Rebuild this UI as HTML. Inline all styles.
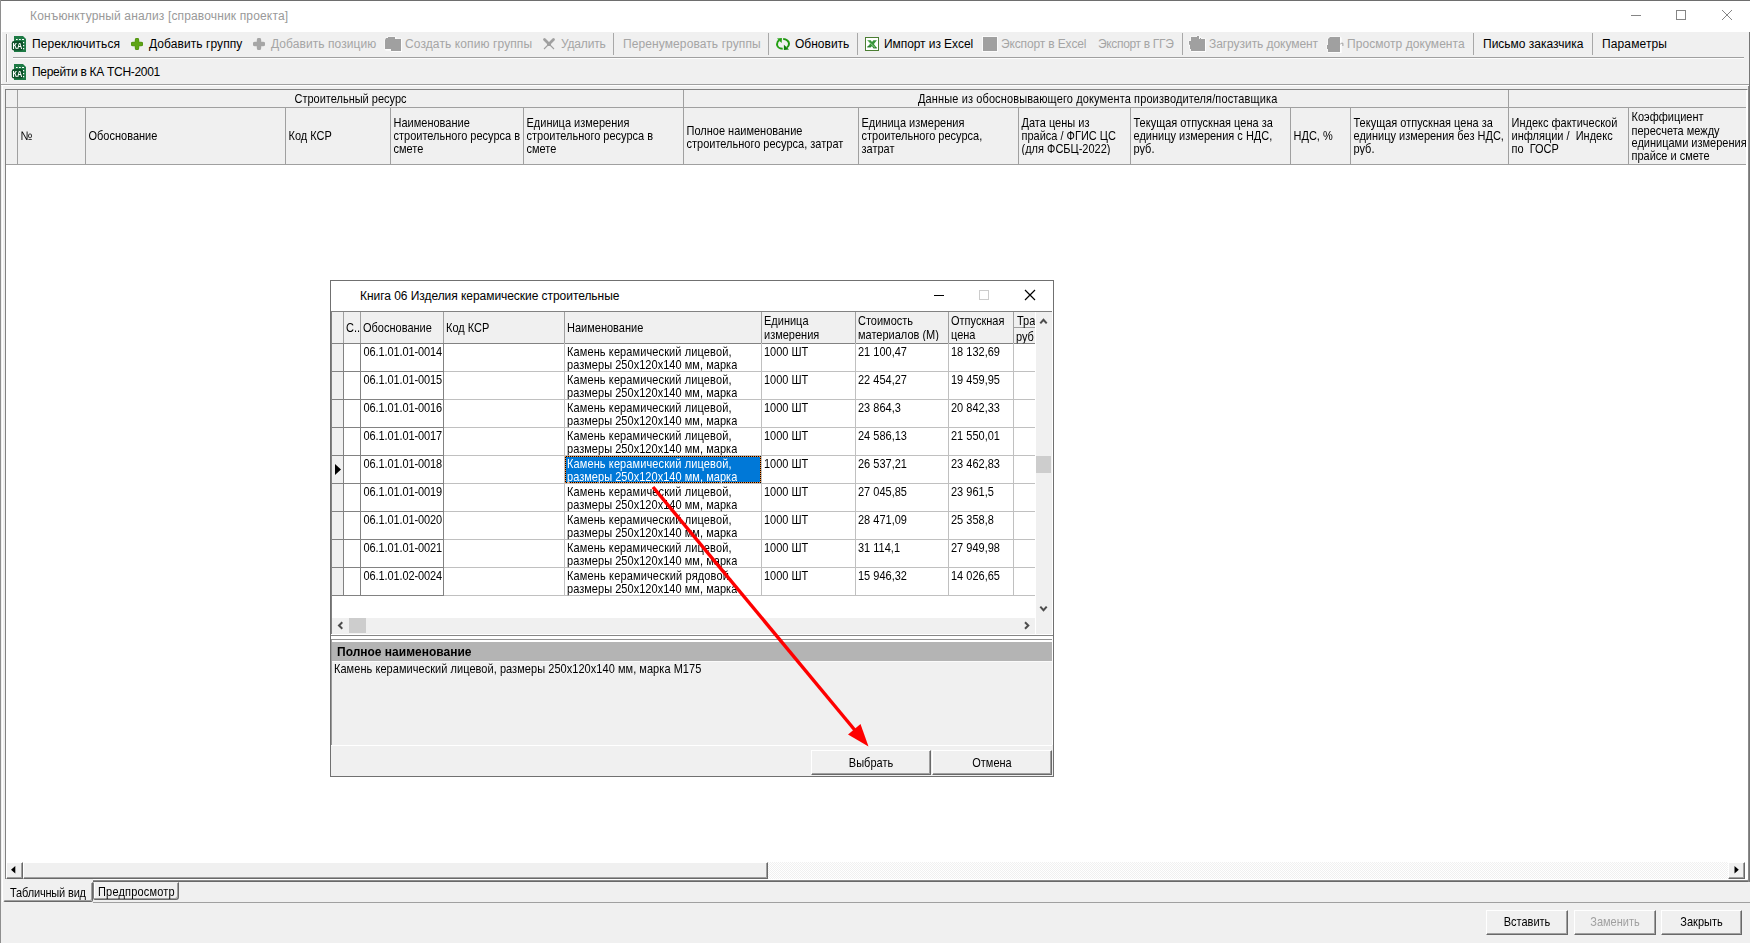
<!DOCTYPE html><html lang="ru"><head><meta charset="utf-8"><title>Конъюнктурный анализ</title><style>
*{box-sizing:border-box;margin:0;padding:0}
html,body{width:1750px;height:943px;overflow:hidden;background:#f0f0f0}
body{position:relative;font-family:"Liberation Sans",sans-serif;font-size:11px;color:#000;line-height:13px}
.a{position:absolute}
.t{position:absolute;white-space:nowrap}
.ui{font-size:12px;line-height:16px}
.dis{color:#a5a5a5}
.hl{position:absolute;height:1px;background:#a0a0a0}
.vl{position:absolute;width:1px;background:#a0a0a0}
.sep{position:absolute;width:1px;top:33px;height:22px;background:#a8a8a8}
.btn{position:absolute;background:#f0f0f0;border:1px solid;border-color:#fff #696969 #696969 #fff;box-shadow:inset -1px -1px 0 #a0a0a0;text-align:center;font-size:11px}
.hc{position:absolute;display:flex;align-items:center;font-size:11px;line-height:13px;padding-left:2.5px;padding-top:1px;overflow:hidden;white-space:nowrap}
.c{position:absolute;font-size:11px;line-height:11.6px;white-space:nowrap;transform:scaleY(1.12);transform-origin:0 0}
.m{line-height:11.6px;transform:scaleY(1.12);transform-origin:0 0}
.hc span{line-height:11.6px;transform:scaleY(1.12);transform-origin:0 50%;display:block}
.btn span{display:inline-block;transform:scaleY(1.12);transform-origin:50% 50%}
</style></head><body>
<div class="a" style="left:0;top:0;width:1750px;height:1px;background:#6e6e6e"></div>
<div class="a" style="left:0;top:0;width:1px;height:943px;background:#8e8e8e"></div>
<div class="a" style="left:2px;top:86px;width:1px;height:816px;background:#fff"></div>
<div class="a" style="left:1px;top:32px;width:1px;height:53px;background:#fff"></div>
<div class="a" style="left:1749px;top:31px;width:1px;height:851px;background:#777"></div>
<div class="a" style="left:1px;top:1px;width:1749px;height:31px;background:#fff"></div>
<div class="t ui" style="left:30px;top:8px;letter-spacing:0.150px;color:#999">Конъюнктурный анализ [справочник проекта]</div>
<svg class="a" style="left:1620px;top:1px" width="120" height="30" viewBox="1620 1 120 30"><g stroke="#858585" stroke-width="1" fill="none"><path d="M1631 15.500h10"/><rect x="1676.500" y="10.500" width="9" height="9"/><path d="M1722 10l10 10M1732 10l-10 10"/></g></svg>
<div class="a" style="left:6px;top:34px;width:1px;height:48px;background:#a0a0a0"></div>
<div class="a" style="left:7px;top:34px;width:1px;height:48px;background:#fff"></div>
<div class="hl" style="left:13px;top:57px;width:1731px;background:#a0a0a0"></div>
<div class="hl" style="left:13px;top:58px;width:1731px;background:#fdfdfd"></div>
<div class="hl" style="left:1px;top:84px;width:1748px;background:#a0a0a0"></div>
<div class="hl" style="left:1px;top:85px;width:1748px;background:#fff"></div>
<svg class="a" style="left:11px;top:36px;will-change:transform" width="16" height="16" viewBox="0 0 16 16"><path d="M3 0h9l3 3v13H3z" fill="#1e7a45"/><rect x="0.800" y="5" width="11.400" height="9.400" rx="2.200" fill="#0c4f28"/><path d="M5 3.500h1.700M8 3.500h1.800M11 3.500h2" stroke="#fff" stroke-width="1"/><path d="M12 6h1.200v1.200h-1.200zM12 9h1.200v1.200h-1.200zM12 12h1.200v1.200h-1.200z" fill="#fff"/><text x="1.600" y="13.300" font-family="Liberation Sans,sans-serif" font-size="9.400" font-weight="bold" fill="#fff" textLength="9.800" lengthAdjust="spacingAndGlyphs">КА</text></svg>
<svg class="a" style="left:11px;top:64px;will-change:transform" width="16" height="16" viewBox="0 0 16 16"><path d="M3 0h9l3 3v13H3z" fill="#1e7a45"/><rect x="0.800" y="5" width="11.400" height="9.400" rx="2.200" fill="#0c4f28"/><path d="M5 3.500h1.700M8 3.500h1.800M11 3.500h2" stroke="#fff" stroke-width="1"/><path d="M12 6h1.200v1.200h-1.200zM12 9h1.200v1.200h-1.200zM12 12h1.200v1.200h-1.200z" fill="#fff"/><text x="1.600" y="13.300" font-family="Liberation Sans,sans-serif" font-size="9.400" font-weight="bold" fill="#fff" textLength="9.800" lengthAdjust="spacingAndGlyphs">КА</text></svg>
<div class="t ui" style="left:32px;top:36px;letter-spacing:0.083px">Переключиться</div>
<svg class="a" style="left:131px;top:38px" width="12" height="12" viewBox="0 0 12 12"><path d="M2 6h8M6 2v8" stroke="#4a8a0c" stroke-width="4.400" stroke-linecap="round"/><path d="M2 6h8M6 2v8" stroke="#5fa416" stroke-width="3.400" stroke-linecap="round"/></svg>
<div class="t ui" style="left:149px;top:36px;letter-spacing:0.071px">Добавить группу</div>
<svg class="a" style="left:253px;top:38px" width="12" height="12" viewBox="0 0 12 12"><path d="M2 6h8M6 2v8" stroke="#a6a6a6" stroke-width="4.400" stroke-linecap="round"/><path d="M2 6h8M6 2v8" stroke="#a6a6a6" stroke-width="3.400" stroke-linecap="round"/></svg>
<div class="t ui dis" style="left:271px;top:36px;letter-spacing:0.067px">Добавить позицию</div>
<svg class="a" style="left:384px;top:36px" width="18" height="16" viewBox="384 36 18 16"><path d="M385 40l1-2h2v-1h7v2h6v12h-10v-2h-6z" fill="#a0a0a0" stroke="#fbfbfb" stroke-width="1.200" paint-order="stroke" filter="drop-shadow(1px 1px 0 #fff)"/></svg>
<div class="t ui dis" style="left:405px;top:36px;letter-spacing:0.105px">Создать копию группы</div>
<svg class="a" style="left:542px;top:37px" width="14" height="14" viewBox="542 37 14 14"><g stroke="#a0a0a0" fill="none"><path d="M544.500 39.500L549 44M553.500 39.500L549 44" stroke-width="2.800" stroke-linecap="round"/><path d="M549 44l-5 5M549 44l5 5" stroke-width="1.100"/></g><rect x="547" y="42" width="4" height="4" fill="#a0a0a0"/></svg>
<div class="t ui dis" style="left:561px;top:36px;letter-spacing:-0.167px">Удалить</div>
<div class="sep" style="left:613px"></div>
<div class="t ui dis" style="left:623px;top:36px;letter-spacing:0.100px">Перенумеровать группы</div>
<div class="sep" style="left:768px"></div>
<svg class="a" style="left:776px;top:38px" width="14" height="12" viewBox="0 0 14 12"><g fill="none" stroke="#23a012" stroke-width="2"><path d="M6.700 10.800C3 10.800 1 8.500 1 6.200C1 4.300 1.900 3 3.300 2.200"/></g><path d="M1 0.400L5.900 0L5.700 5z" fill="#23a012"/><g fill="none" stroke="#1f9510" stroke-width="2"><path d="M7.200 1.100C10.500 1.100 13 3.300 13 5.800C13 7.500 12.200 8.700 11 9.500"/></g><path d="M7.900 6.800V12L13 11.500z" fill="#0f7f0a"/></svg>
<div class="t ui" style="left:795px;top:36px;letter-spacing:0.000px">Обновить</div>
<div class="sep" style="left:857px"></div>
<svg class="a" style="left:865px;top:37px" width="14" height="14" viewBox="0 0 14 14"><rect x="0.500" y="0.500" width="13" height="13" fill="#fff" stroke="#4c7e33"/><path d="M2.200 3.200h3.600L7 5L8.400 3.200h3.500L8.900 7L12 11.200H8.400L7 9.200L5.600 10.200H2L5.200 6.800z" fill="#37953a"/><path d="M2.500 9.600h3l.5.600H2.200zM8.600 10.400h3l.3.800H8.400z" fill="#1f6a22"/><path d="M3 4l7 6.500" stroke="#a8d8a0" stroke-width="0.800"/></svg>
<div class="t ui" style="left:884px;top:36px;letter-spacing:-0.071px">Импорт из Excel</div>
<div class="a" style="left:983px;top:37px;width:14px;height:14px;background:#a0a0a0;box-shadow:0 0 0 1px #fafafa"></div>
<div class="t ui dis" style="left:1001px;top:36px;letter-spacing:-0.143px">Экспорт в Excel</div>
<div class="t ui dis" style="left:1098px;top:36px;letter-spacing:-0.333px">Экспорт в ГГЭ</div>
<div class="sep" style="left:1182px"></div>
<svg class="a" style="left:1188px;top:35px" width="18" height="17" viewBox="1188 35 18 17"><path d="M1191 37h6v-1h2v3h1v-1h1v1h4v12h-14v-2h-1v-4.300h-1V41h2z" fill="#a0a0a0" stroke="#fbfbfb" stroke-width="1.200" paint-order="stroke" filter="drop-shadow(1px 1px 0 #fff)"/></svg>
<div class="t ui dis" style="left:1209px;top:36px;letter-spacing:-0.059px">Загрузить документ</div>
<svg class="a" style="left:1326px;top:36px" width="18" height="17" viewBox="1326 36 18 17"><path d="M1330 37h10v15h-12v-3h-1v-4h1v-6z" fill="#a0a0a0" stroke="#fbfbfb" stroke-width="1.200" paint-order="stroke" filter="drop-shadow(1px 1px 0 #fff)"/><path d="M1340 44.500l1.300-1.300h1.600v2.800" fill="none" stroke="#a0a0a0" stroke-width="1"/></svg>
<div class="t ui dis" style="left:1347px;top:36px;letter-spacing:0.059px">Просмотр документа</div>
<div class="sep" style="left:1473px"></div>
<div class="t ui" style="left:1483px;top:36px;letter-spacing:0.000px">Письмо заказчика</div>
<div class="sep" style="left:1592px"></div>
<div class="t ui" style="left:1602px;top:36px;letter-spacing:0.125px">Параметры</div>
<div class="t ui" style="left:32px;top:64px;letter-spacing:-0.300px">Перейти в КА ТСН-2001</div>
<div class="a" style="left:5px;top:89px;width:1743px;height:792px;background:#fff;border:1px solid #828282;border-right-color:#fff;border-bottom-color:#fff"></div>
<div class="a" style="left:6px;top:90px;width:1740px;height:74px;background:#f0f0f0"></div>
<div class="hl" style="left:6px;top:107px;width:1740px"></div>
<div class="hl" style="left:6px;top:164px;width:1740px"></div>
<div class="vl" style="left:17px;top:90px;height:74px"></div>
<div class="vl" style="left:85px;top:108px;height:56px"></div>
<div class="vl" style="left:285px;top:108px;height:56px"></div>
<div class="vl" style="left:390px;top:108px;height:56px"></div>
<div class="vl" style="left:523px;top:108px;height:56px"></div>
<div class="vl" style="left:683px;top:90px;height:74px"></div>
<div class="vl" style="left:858px;top:108px;height:56px"></div>
<div class="vl" style="left:1018px;top:108px;height:56px"></div>
<div class="vl" style="left:1130px;top:108px;height:56px"></div>
<div class="vl" style="left:1290px;top:108px;height:56px"></div>
<div class="vl" style="left:1350px;top:108px;height:56px"></div>
<div class="vl" style="left:1508px;top:90px;height:74px"></div>
<div class="vl" style="left:1628px;top:108px;height:56px"></div>
<div class="t m" style="left:18px;top:93px;width:665px;text-align:center">Строительный ресурс</div>
<div class="t m" style="left:918px;top:93px;letter-spacing:0.119px;font-size:11px">Данные из обосновывающего документа производителя/поставщика</div>
<div class="hc" style="left:18px;top:108px;width:67px;height:56px"><span>№</span></div>
<div class="hc" style="left:86px;top:108px;width:199px;height:56px"><span>Обоснование</span></div>
<div class="hc" style="left:286px;top:108px;width:104px;height:56px"><span>Код КСР</span></div>
<div class="hc" style="left:391px;top:108px;width:132px;height:56px"><span>Наименование<br>строительного ресурса в<br>смете</span></div>
<div class="hc" style="left:524px;top:108px;width:159px;height:56px"><span>Единица измерения<br>строительного ресурса в<br>смете</span></div>
<div class="hc" style="left:684px;top:109px;width:174px;height:56px"><span>Полное наименование<br>строительного ресурса, затрат</span></div>
<div class="hc" style="left:859px;top:108px;width:159px;height:56px"><span>Единица измерения<br>строительного ресурса,<br>затрат</span></div>
<div class="hc" style="left:1019px;top:108px;width:111px;height:56px"><span>Дата цены из<br>прайса / ФГИС ЦС<br>(для ФСБЦ-2022)</span></div>
<div class="hc" style="left:1131px;top:108px;width:159px;height:56px"><span>Текущая отпускная цена за<br>единицу измерения с НДС,<br>руб.</span></div>
<div class="hc" style="left:1291px;top:108px;width:59px;height:56px"><span>НДС, %</span></div>
<div class="hc" style="left:1351px;top:108px;width:157px;height:56px"><span>Текущая отпускная цена за<br>единицу измерения без НДС,<br>руб.</span></div>
<div class="hc" style="left:1509px;top:108px;width:119px;height:56px"><span>Индекс фактической<br>инфляции /&nbsp; Индекс<br>по&nbsp; ГОСР</span></div>
<div class="hc" style="left:1629px;top:109px;width:117px;height:56px"><span>Коэффициент<br>пересчета между<br>единицами измерения в<br>прайсе и смете</span></div>
<div class="a" style="left:6px;top:862px;width:1739px;height:17px;background:conic-gradient(#fff 25%,#f0f0f0 0 50%,#fff 0 75%,#f0f0f0 0) 0 0/2px 2px"></div>
<div class="btn" style="left:6px;top:862px;width:17px;height:17px"></div>
<svg class="a" style="left:11px;top:866px" width="5" height="8" viewBox="0 0 5 8"><path d="M4.300 0v7.400L0 3.700z" fill="#000"/></svg>
<div class="btn" style="left:1728px;top:862px;width:17px;height:17px"></div>
<svg class="a" style="left:1734px;top:866px" width="5" height="8" viewBox="0 0 5 8"><path d="M0.500 0v7.400L4.800 3.700z" fill="#000"/></svg>
<div class="btn" style="left:23px;top:862px;width:745px;height:17px"></div>
<div class="a" style="left:3px;top:879px;width:1745px;height:3px;background:#f0f0f0"></div>
<div class="hl" style="left:93px;top:879px;width:1654px;background:#fff"></div>
<div class="hl" style="left:93px;top:880px;width:1655px;background:#8a8a8a"></div>
<div class="hl" style="left:93px;top:881px;width:1655px;background:#696969"></div>
<div class="a" style="left:1748px;top:86px;width:1px;height:796px;background:#8a8a8a"></div>
<div class="a" style="left:3px;top:882px;width:90px;height:20px;background:#f0f0f0;border:1px solid;border-color:transparent #696969 #696969 transparent;border-radius:0 0 2px 2px;box-shadow:inset -1px -1px 0 #a0a0a0"></div>
<div class="t m" style="left:10px;top:887px;letter-spacing:-0.167px;font-size:11px">Табличный вид</div>
<div class="a" style="left:93px;top:882px;width:86px;height:18px;background:#f0f0f0;border:1px solid;border-color:transparent #696969 #696969 #808080;border-radius:0 0 3px 2px;box-shadow:inset -1px -1px 0 #a0a0a0,inset 1px 0 0 #fff"></div>
<div class="t m" style="left:98px;top:886px;letter-spacing:0.182px;font-size:11px">Предпросмотр</div>
<div class="hl" style="left:93px;top:902px;width:1657px;background:#a0a0a0"></div>
<div class="btn" style="left:1486px;top:910px;width:82px;height:25px;line-height:22px"><span>Вставить</span></div>
<div class="btn" style="left:1574px;top:910px;width:82px;height:25px;line-height:22px;color:#a0a0a0"><span>Заменить</span></div>
<div class="btn" style="left:1661px;top:910px;width:81px;height:25px;line-height:22px"><span>Закрыть</span></div>
<div class="a" style="left:330px;top:280px;width:724px;height:497px;background:#f0f0f0;border:1px solid #707070"></div>
<div class="a" style="left:331px;top:281px;width:722px;height:30px;background:#fff"></div>
<div class="t ui" style="left:360px;top:288px;letter-spacing:-0.049px">Книга 06 Изделия керамические строительные</div>
<svg class="a" style="left:920px;top:281px" width="130" height="30" viewBox="0 0 130 30"><g fill="none" stroke-width="1"><path d="M14 14.500h10" stroke="#000"/><rect x="59.500" y="9.500" width="9" height="9" stroke="#ccc"/><path d="M105 9l10 10M115 9l-10 10" stroke="#000" stroke-width="1.200"/></g></svg>
<div class="a" style="left:331px;top:311px;width:721px;height:324px;background:#fff;border:1px solid #828282;border-right:0;border-bottom:0"></div>
<div class="a" style="left:332px;top:312px;width:703px;height:31px;background:#f0f0f0"></div>
<div class="a" style="left:332px;top:343px;width:11px;height:253px;background:#f0f0f0"></div>
<div class="hl" style="left:332px;top:343px;width:703px;background:#828282"></div>
<div class="vl" style="left:343px;top:312px;height:284px;background:#828282"></div>
<div class="vl" style="left:360px;top:312px;height:284px;background:#828282"></div>
<div class="vl" style="left:443px;top:312px;height:284px;background:#828282"></div>
<div class="vl" style="left:564px;top:312px;height:284px;background:#c0c0c0"></div>
<div class="vl" style="left:761px;top:312px;height:284px;background:#c0c0c0"></div>
<div class="vl" style="left:855px;top:312px;height:284px;background:#c0c0c0"></div>
<div class="vl" style="left:948px;top:312px;height:284px;background:#c0c0c0"></div>
<div class="vl" style="left:1013px;top:312px;height:284px;background:#c0c0c0"></div>
<div class="vl" style="left:343px;top:312px;height:31px;background:#a0a0a0"></div>
<div class="vl" style="left:360px;top:312px;height:31px;background:#a0a0a0"></div>
<div class="vl" style="left:443px;top:312px;height:31px;background:#a0a0a0"></div>
<div class="vl" style="left:564px;top:312px;height:31px;background:#a0a0a0"></div>
<div class="vl" style="left:761px;top:312px;height:31px;background:#a0a0a0"></div>
<div class="vl" style="left:855px;top:312px;height:31px;background:#a0a0a0"></div>
<div class="vl" style="left:948px;top:312px;height:31px;background:#a0a0a0"></div>
<div class="vl" style="left:1013px;top:312px;height:31px;background:#a0a0a0"></div>
<div class="hl" style="left:1014px;top:327px;width:21px"></div>
<div class="c" style="left:346px;top:322px">С..</div>
<div class="c" style="left:363px;top:322px">Обоснование</div>
<div class="c" style="left:446px;top:322px">Код КСР</div>
<div class="c" style="left:567px;top:322px">Наименование</div>
<div class="c" style="left:764px;top:315px">Единица<br>измерения</div>
<div class="c" style="left:858px;top:315px">Стоимость<br>материалов (М)</div>
<div class="c" style="left:951px;top:315px">Отпускная<br>цена</div>
<div class="c" style="left:1017px;top:315px;letter-spacing:0.000px;font-size:11px">Тра</div>
<div class="c" style="left:1016px;top:331px;height:11px;overflow:hidden">руб</div>
<div class="hl" style="left:332px;top:371px;width:112px;background:#828282"></div>
<div class="hl" style="left:444px;top:371px;width:591px;background:#c0c0c0"></div>
<div class="c" style="left:363.500px;top:346px;letter-spacing:-.1px">06.1.01.01-0014</div>
<div class="c" style="left:567px;top:346px;letter-spacing:0.111px;font-size:11px">Камень керамический лицевой,</div>
<div class="c" style="left:567px;top:359px;letter-spacing:0.036px;font-size:11px;height:10.700px;overflow:hidden">размеры 250х120х140 мм, марка</div>
<div class="c" style="left:764px;top:346px">1000 ШТ</div>
<div class="c" style="left:858px;top:346px">21 100,47</div>
<div class="c" style="left:951px;top:346px">18 132,69</div>
<div class="hl" style="left:332px;top:399px;width:112px;background:#828282"></div>
<div class="hl" style="left:444px;top:399px;width:591px;background:#c0c0c0"></div>
<div class="c" style="left:363.500px;top:374px;letter-spacing:-.1px">06.1.01.01-0015</div>
<div class="c" style="left:567px;top:374px;letter-spacing:0.111px;font-size:11px">Камень керамический лицевой,</div>
<div class="c" style="left:567px;top:387px;letter-spacing:0.036px;font-size:11px;height:10.700px;overflow:hidden">размеры 250х120х140 мм, марка</div>
<div class="c" style="left:764px;top:374px">1000 ШТ</div>
<div class="c" style="left:858px;top:374px">22 454,27</div>
<div class="c" style="left:951px;top:374px">19 459,95</div>
<div class="hl" style="left:332px;top:427px;width:112px;background:#828282"></div>
<div class="hl" style="left:444px;top:427px;width:591px;background:#c0c0c0"></div>
<div class="c" style="left:363.500px;top:402px;letter-spacing:-.1px">06.1.01.01-0016</div>
<div class="c" style="left:567px;top:402px;letter-spacing:0.111px;font-size:11px">Камень керамический лицевой,</div>
<div class="c" style="left:567px;top:415px;letter-spacing:0.036px;font-size:11px;height:10.700px;overflow:hidden">размеры 250х120х140 мм, марка</div>
<div class="c" style="left:764px;top:402px">1000 ШТ</div>
<div class="c" style="left:858px;top:402px">23 864,3</div>
<div class="c" style="left:951px;top:402px">20 842,33</div>
<div class="hl" style="left:332px;top:455px;width:112px;background:#828282"></div>
<div class="hl" style="left:444px;top:455px;width:591px;background:#c0c0c0"></div>
<div class="c" style="left:363.500px;top:430px;letter-spacing:-.1px">06.1.01.01-0017</div>
<div class="c" style="left:567px;top:430px;letter-spacing:0.111px;font-size:11px">Камень керамический лицевой,</div>
<div class="c" style="left:567px;top:443px;letter-spacing:0.036px;font-size:11px;height:10.700px;overflow:hidden">размеры 250х120х140 мм, марка</div>
<div class="c" style="left:764px;top:430px">1000 ШТ</div>
<div class="c" style="left:858px;top:430px">24 586,13</div>
<div class="c" style="left:951px;top:430px">21 550,01</div>
<div class="a" style="left:565px;top:456px;width:196px;height:27px;background:conic-gradient(#000 25%,#ff8828 0 50%,#000 0 75%,#ff8828 0) 0 0/2px 2px"></div>
<div class="a" style="left:566px;top:457px;width:194px;height:25px;background:#0078d7"></div>
<div class="hl" style="left:332px;top:483px;width:112px;background:#828282"></div>
<div class="hl" style="left:444px;top:483px;width:591px;background:#c0c0c0"></div>
<div class="c" style="left:363.500px;top:458px;letter-spacing:-.1px">06.1.01.01-0018</div>
<div class="c" style="left:567px;top:458px;letter-spacing:0.111px;font-size:11px;color:#fff">Камень керамический лицевой,</div>
<div class="c" style="left:567px;top:471px;letter-spacing:0.036px;font-size:11px;height:10.700px;overflow:hidden;color:#fff">размеры 250х120х140 мм, марка</div>
<div class="c" style="left:764px;top:458px">1000 ШТ</div>
<div class="c" style="left:858px;top:458px">26 537,21</div>
<div class="c" style="left:951px;top:458px">23 462,83</div>
<div class="hl" style="left:332px;top:511px;width:112px;background:#828282"></div>
<div class="hl" style="left:444px;top:511px;width:591px;background:#c0c0c0"></div>
<div class="c" style="left:363.500px;top:486px;letter-spacing:-.1px">06.1.01.01-0019</div>
<div class="c" style="left:567px;top:486px;letter-spacing:0.111px;font-size:11px">Камень керамический лицевой,</div>
<div class="c" style="left:567px;top:499px;letter-spacing:0.036px;font-size:11px;height:10.700px;overflow:hidden">размеры 250х120х140 мм, марка</div>
<div class="c" style="left:764px;top:486px">1000 ШТ</div>
<div class="c" style="left:858px;top:486px">27 045,85</div>
<div class="c" style="left:951px;top:486px">23 961,5</div>
<div class="hl" style="left:332px;top:539px;width:112px;background:#828282"></div>
<div class="hl" style="left:444px;top:539px;width:591px;background:#c0c0c0"></div>
<div class="c" style="left:363.500px;top:514px;letter-spacing:-.1px">06.1.01.01-0020</div>
<div class="c" style="left:567px;top:514px;letter-spacing:0.111px;font-size:11px">Камень керамический лицевой,</div>
<div class="c" style="left:567px;top:527px;letter-spacing:0.036px;font-size:11px;height:10.700px;overflow:hidden">размеры 250х120х140 мм, марка</div>
<div class="c" style="left:764px;top:514px">1000 ШТ</div>
<div class="c" style="left:858px;top:514px">28 471,09</div>
<div class="c" style="left:951px;top:514px">25 358,8</div>
<div class="hl" style="left:332px;top:567px;width:112px;background:#828282"></div>
<div class="hl" style="left:444px;top:567px;width:591px;background:#c0c0c0"></div>
<div class="c" style="left:363.500px;top:542px;letter-spacing:-.1px">06.1.01.01-0021</div>
<div class="c" style="left:567px;top:542px;letter-spacing:0.111px;font-size:11px">Камень керамический лицевой,</div>
<div class="c" style="left:567px;top:555px;letter-spacing:0.036px;font-size:11px;height:10.700px;overflow:hidden">размеры 250х120х140 мм, марка</div>
<div class="c" style="left:764px;top:542px">1000 ШТ</div>
<div class="c" style="left:858px;top:542px">31 114,1</div>
<div class="c" style="left:951px;top:542px">27 949,98</div>
<div class="hl" style="left:332px;top:595px;width:112px;background:#828282"></div>
<div class="hl" style="left:444px;top:595px;width:591px;background:#c0c0c0"></div>
<div class="c" style="left:363.500px;top:570px;letter-spacing:-.1px">06.1.01.02-0024</div>
<div class="c" style="left:567px;top:570px;letter-spacing:0.148px;font-size:11px">Камень керамический рядовой,</div>
<div class="c" style="left:567px;top:583px;letter-spacing:0.036px;font-size:11px;height:10.700px;overflow:hidden">размеры 250х120х140 мм, марка</div>
<div class="c" style="left:764px;top:570px">1000 ШТ</div>
<div class="c" style="left:858px;top:570px">15 946,32</div>
<div class="c" style="left:951px;top:570px">14 026,65</div>
<svg class="a" style="left:335px;top:464px" width="6" height="11" viewBox="0 0 6 11"><path d="M0 0l6 5.500L0 11z" fill="#000"/></svg>
<div class="a" style="left:1035px;top:312px;width:1px;height:322px;background:#fff"></div>
<div class="a" style="left:1036px;top:312px;width:16px;height:322px;background:#f0f0f0"></div>
<div class="a" style="left:1036px;top:456px;width:15px;height:17px;background:#cdcdcd"></div>
<div class="a" style="left:1052px;top:311px;width:1px;height:324px;background:#fff"></div>
<div class="a" style="left:332px;top:618px;width:703px;height:16px;background:#f0f0f0"></div>
<div class="a" style="left:349px;top:618px;width:17px;height:15px;background:#cdcdcd"></div>
<svg class="a" style="left:332px;top:312px" width="720" height="322" viewBox="332 312 720 322"><g fill="none" stroke="#4d4d4d" stroke-width="2"><path d="M1040.300 323.300l3.200-3.500l3.200 3.500"/><path d="M1040.300 606.700l3.200 3.500l3.200-3.500"/><path d="M342.300 622.300l-3.300 3.200l3.300 3.200"/><path d="M1025 622.300l3.300 3.200l-3.300 3.200"/></g></svg>
<div class="a" style="left:331px;top:634px;width:722px;height:8px;background:#fff"></div>
<div class="hl" style="left:331px;top:635px;width:722px;background:#868686"></div>
<div class="hl" style="left:331px;top:639px;width:721px;background:#929292"></div>
<div class="a" style="left:332px;top:642px;width:720px;height:19px;background:#b4b4b4"></div>
<div class="hl" style="left:332px;top:661px;width:720px;background:#fafafa"></div>
<div class="t" style="left:337px;top:646px;letter-spacing:0.000px;font-size:12px;font-weight:bold;line-height:13px;transform:scaleY(1.04);transform-origin:0 0">Полное наименование</div>
<div class="vl" style="left:331px;top:640px;height:105px;background:#9a9a9a"></div>
<div class="hl" style="left:331px;top:745px;width:721px;background:#fff"></div>
<div class="vl" style="left:1052px;top:640px;height:105px;background:#fff"></div>
<div class="t m" style="left:334px;top:663px;letter-spacing:0.048px;font-size:11px">Камень керамический лицевой, размеры 250х120х140 мм, марка М175</div>
<div class="btn" style="left:811px;top:750px;width:120px;height:25px;line-height:24px"><span>Выбрать</span></div>
<div class="btn" style="left:932px;top:750px;width:120px;height:25px;line-height:24px"><span>Отмена</span></div>
<svg class="a" style="left:640px;top:470px" width="240" height="290" viewBox="640 470 240 290"><line x1="653" y1="487" x2="856" y2="731.500" stroke="#fe0000" stroke-width="3.400"/><path d="M868.500 746.500L848 734.500L860.500 724z" fill="#fe0000"/></svg>
</body></html>
